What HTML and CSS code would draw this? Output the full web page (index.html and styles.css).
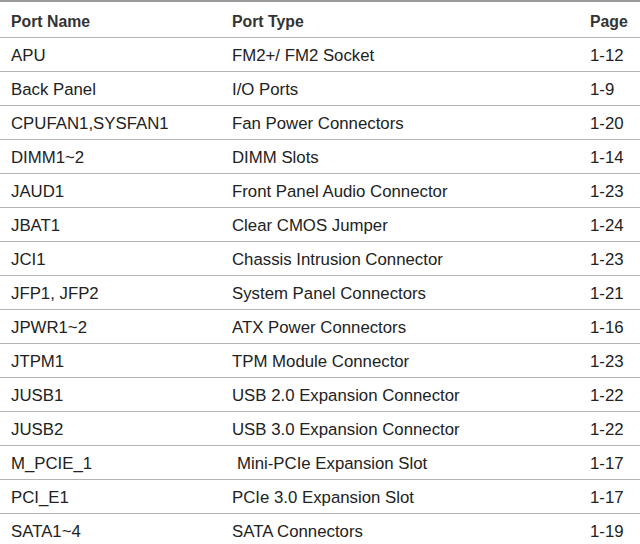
FILE: index.html
```html
<!DOCTYPE html>
<html>
<head>
<meta charset="utf-8">
<link rel="stylesheet" href="styles.css">
</head>
<body>
<div class="table">
  <div class="row head">
    <div class="c1">Port Name</div><div class="c2">Port Type</div><div class="c3">Page</div>
  </div>
  <div class="row"><div class="c1">APU</div><div class="c2">FM2+/ FM2 Socket</div><div class="c3">1-12</div></div>
  <div class="row"><div class="c1">Back Panel</div><div class="c2">I/O Ports</div><div class="c3">1-9</div></div>
  <div class="row"><div class="c1">CPUFAN1,SYSFAN1</div><div class="c2">Fan Power Connectors</div><div class="c3">1-20</div></div>
  <div class="row"><div class="c1">DIMM1~2</div><div class="c2">DIMM Slots</div><div class="c3">1-14</div></div>
  <div class="row"><div class="c1">JAUD1</div><div class="c2">Front Panel Audio Connector</div><div class="c3">1-23</div></div>
  <div class="row"><div class="c1">JBAT1</div><div class="c2">Clear CMOS Jumper</div><div class="c3">1-24</div></div>
  <div class="row"><div class="c1">JCI1</div><div class="c2">Chassis Intrusion Connector</div><div class="c3">1-23</div></div>
  <div class="row"><div class="c1">JFP1, JFP2</div><div class="c2">System Panel Connectors</div><div class="c3">1-21</div></div>
  <div class="row"><div class="c1">JPWR1~2</div><div class="c2">ATX Power Connectors</div><div class="c3">1-16</div></div>
  <div class="row"><div class="c1">JTPM1</div><div class="c2">TPM Module Connector</div><div class="c3">1-23</div></div>
  <div class="row"><div class="c1">JUSB1</div><div class="c2">USB 2.0 Expansion Connector</div><div class="c3">1-22</div></div>
  <div class="row"><div class="c1">JUSB2</div><div class="c2">USB 3.0 Expansion Connector</div><div class="c3">1-22</div></div>
  <div class="row"><div class="c1">M_PCIE_1</div><div class="c2 indent">Mini-PCIe Expansion Slot</div><div class="c3">1-17</div></div>
  <div class="row"><div class="c1">PCI_E1</div><div class="c2">PCIe 3.0 Expansion Slot</div><div class="c3">1-17</div></div>
  <div class="row"><div class="c1">SATA1~4</div><div class="c2">SATA Connectors</div><div class="c3">1-19</div></div>
</div>
</body>
</html>
```

FILE: styles.css
```css
html, body {
  margin: 0;
  padding: 0;
  background: #ffffff;
}
body {
  width: 640px;
  height: 544px;
  overflow: hidden;
  font-family: "Liberation Sans", Arial, sans-serif;
  font-size: 16.8px;
  color: #222222;
}
.table {
  display: flex;
  flex-direction: column;
}
.row {
  display: grid;
  grid-template-columns: 232px 358px 1fr;
  align-items: center;
  box-sizing: border-box;
  height: 34px;
  padding-top: 2px;
  border-bottom: 1px solid #b4b4b4;
  white-space: nowrap;
}
.row.head {
  height: 38px;
  padding-top: 4px;
  border-top: 2px solid #9a9a9a;
  font-weight: bold;
  font-size: 15.8px;
  color: #333333;
}
.c1 {
  padding-left: 11px;
}
.indent {
  padding-left: 5px;
}
```
